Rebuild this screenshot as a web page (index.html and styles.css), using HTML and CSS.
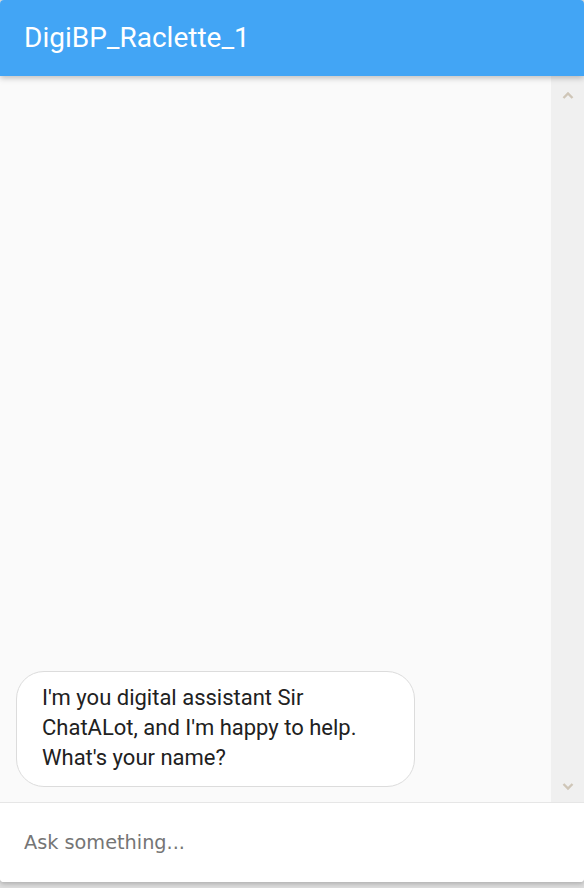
FILE: index.html
```html
<!DOCTYPE html>
<html>
<head>
<meta charset="utf-8">
<link rel="stylesheet" href="styles.css">
</head>
<body>
<div class="card">
  <header class="bar">
    <h1 class="title">DigiBP_Raclette_1</h1>
  </header>
  <div class="body">
    <div class="messages">
      <div class="bubble">I'm you digital assistant Sir ChatALot, and I'm happy to help. What's your name?</div>
    </div>
    <div class="scrollbar">
      <svg class="arrow" width="14" height="10" viewBox="0 0 14 10"><path d="M2.5 8 L7 3.5 L11.5 8" fill="none" stroke="#cfc6b8" stroke-width="2.4"/></svg>
      <svg class="arrow" width="14" height="10" viewBox="0 0 14 10"><path d="M2.5 2 L7 6.5 L11.5 2" fill="none" stroke="#cfc6b8" stroke-width="2.4"/></svg>
    </div>
  </div>
  <div class="composer">
    <input class="ask" type="text" placeholder="Ask something...">
  </div>
</div>
</body>
</html>
```
FILE: styles.css
```css
* { box-sizing: border-box; }
html, body { margin: 0; padding: 0; }
body {
  width: 584px;
  height: 888px;
  background: #dcdcdc;
  overflow: hidden;
  font-family: Roboto, "Liberation Sans", sans-serif;
}
.card {
  width: 584px;
  height: 882px;
  display: flex;
  flex-direction: column;
  border-radius: 4px;
  overflow: hidden;
  background: #fff;
  box-shadow: 0 2px 4px rgba(0,0,0,0.2);
}
.bar {
  height: 76px;
  flex: none;
  background: #42a5f5;
  display: flex;
  align-items: center;
  padding: 0 24px;
  box-shadow: 0 2px 6px rgba(0,0,0,0.25);
  position: relative;
  z-index: 2;
}
.title {
  margin: 0;
  color: #fff;
  font-weight: 400;
  font-size: 28px;
  line-height: 34px;
}
.body {
  flex: 1;
  display: flex;
  background: #fafafa;
  border-bottom: 1px solid #e6e6e6;
}
.messages {
  flex: 1;
  display: flex;
  flex-direction: column;
  justify-content: flex-end;
  padding: 0 0 15px 16px;
}
.bubble {
  width: 399px;
  background: #fff;
  border: 1px solid #dcdcdc;
  border-radius: 28px;
  padding: 11px 44px 13px 25px;
  font-size: 22px;
  line-height: 30px;
  color: #212121;
}
.scrollbar {
  width: 33px;
  flex: none;
  background: #f0f0f0;
  display: flex;
  flex-direction: column;
  justify-content: space-between;
  align-items: center;
  padding: 14px 0 10px 1px;
}
.composer {
  height: 79px;
  flex: none;
  display: flex;
  align-items: center;
  padding: 0 24px;
  background: #fff;
}
.ask {
  width: 100%;
  border: none;
  outline: none;
  background: transparent;
  padding: 0;
  font-family: "DejaVu Sans", Verdana, sans-serif;
  font-size: 19.3px;
  color: #333;
}
.ask::placeholder { color: #757575; }
```
